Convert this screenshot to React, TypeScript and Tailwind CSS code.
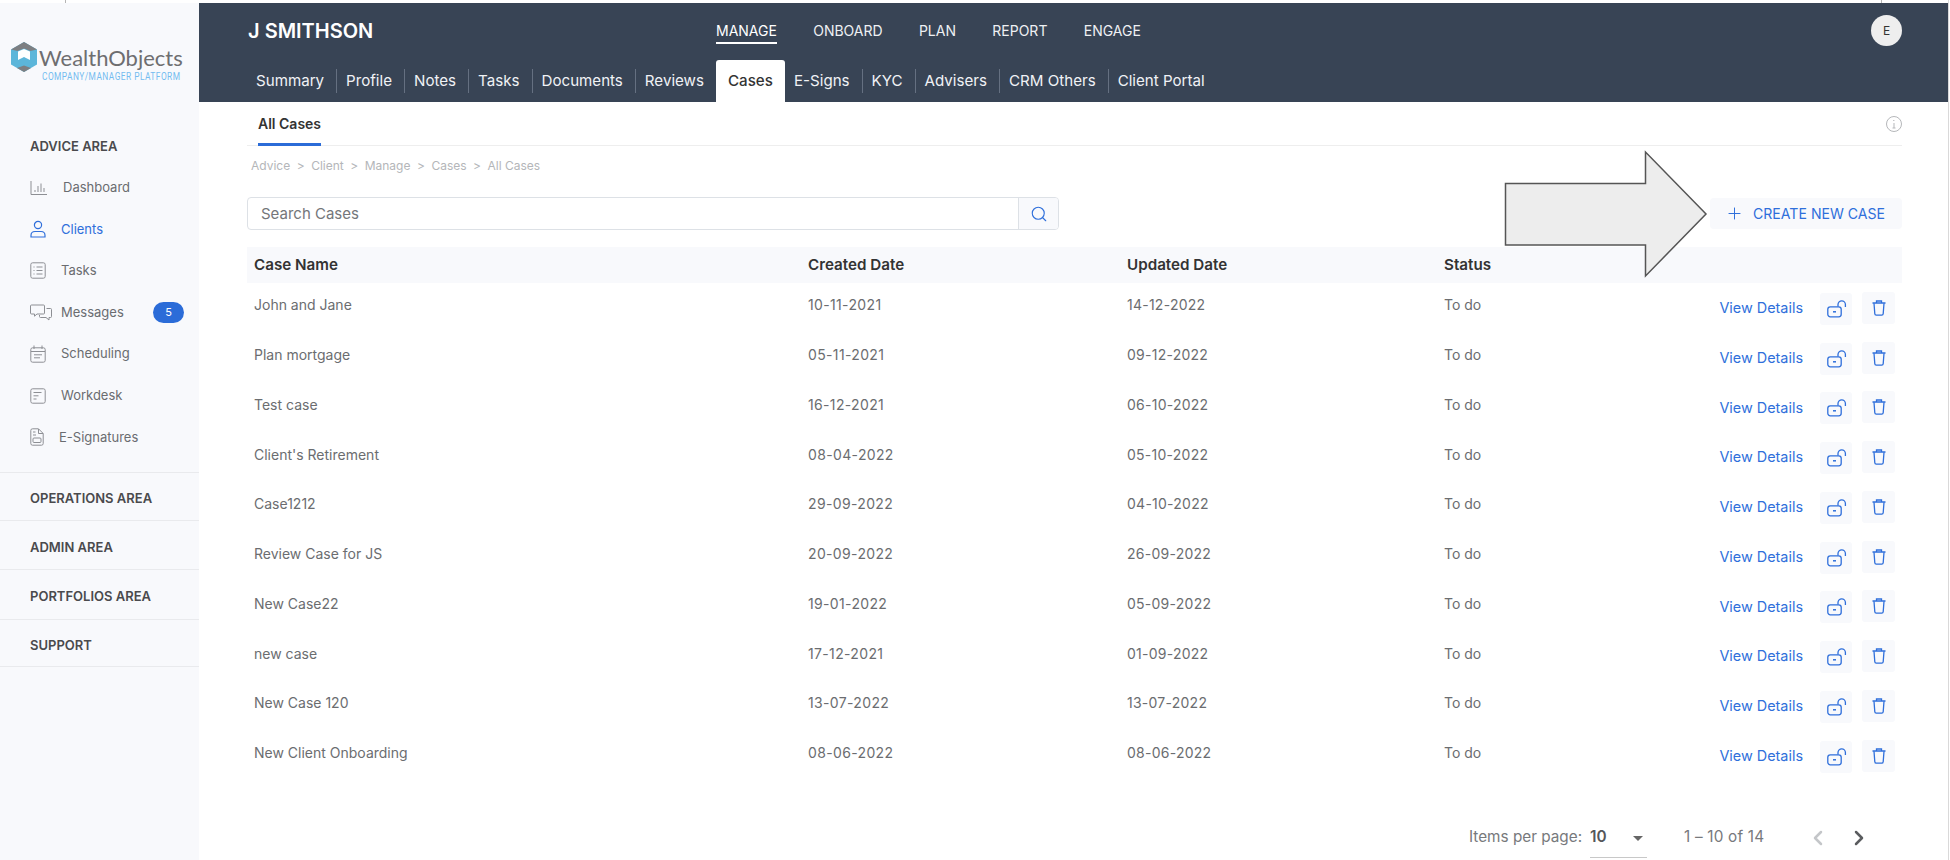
import { Search, Plus, ChevronLeft, ChevronRight } from 'lucide-react';

const CASES = [
  { name: 'John and Jane', created: '10-11-2021', updated: '14-12-2022' },
  { name: 'Plan mortgage', created: '05-11-2021', updated: '09-12-2022' },
  { name: 'Test case', created: '16-12-2021', updated: '06-10-2022' },
  { name: "Client's Retirement", created: '08-04-2022', updated: '05-10-2022' },
  { name: 'Case1212', created: '29-09-2022', updated: '04-10-2022' },
  { name: 'Review Case for JS', created: '20-09-2022', updated: '26-09-2022' },
  { name: 'New Case22', created: '19-01-2022', updated: '05-09-2022' },
  { name: 'new case', created: '17-12-2021', updated: '01-09-2022' },
  { name: 'New Case 120', created: '13-07-2022', updated: '13-07-2022' },
  { name: 'New Client Onboarding', created: '08-06-2022', updated: '08-06-2022' },
];

const TOP_NAV = ['MANAGE', 'ONBOARD', 'PLAN', 'REPORT', 'ENGAGE'];
const SUB_NAV = ['Summary', 'Profile', 'Notes', 'Tasks', 'Documents', 'Reviews', 'Cases', 'E-Signs', 'KYC', 'Advisers', 'CRM Others', 'Client Portal'];
const CRUMBS = ['Advice', 'Client', 'Manage', 'Cases', 'All Cases'];

function DashboardIcon() {
  return (
    <svg width="18" height="16" viewBox="0 0 18 16" fill="none" stroke="#8d8f94" strokeWidth="1">
      <path d="M1 1v13.500h16" />
      <path d="M5 12v-2M8 12V6M11 12V3.500M14 12V8" />
    </svg>
  );
}

function UserIcon() {
  return (
    <svg width="16" height="18" viewBox="0 0 16 18" fill="none" stroke="#2f6fdb" strokeWidth="1.200">
      <circle cx="8" cy="5" r="3.600" />
      <path d="M1 17v-1.600C1 12.800 3 11.500 5 11.500h6c2 0 4 1.300 4 3.900V17z" />
    </svg>
  );
}

function TasksIcon() {
  return (
    <svg width="16" height="17" viewBox="0 0 16 17" fill="none" stroke="#8d8f94" strokeWidth="1">
      <rect x="0.800" y="0.800" width="14.400" height="15.400" rx="1.800" />
      <path d="M3.500 5h1M6.500 5h6M3.500 8.500h1M6.500 8.500h6M3.500 12h1M6.500 12h6" />
    </svg>
  );
}

function MessagesIcon() {
  return (
    <svg width="22" height="18" viewBox="0 0 22 18" fill="none" stroke="#8d8f94" strokeWidth="1">
      <path d="M1.500 1h12a1 1 0 0 1 1 1v7a1 1 0 0 1-1 1H7l-2.500 2.200V10H1.500a1 1 0 0 1-1-1V2a1 1 0 0 1 1-1z" />
      <path d="M16.500 4.500h4a1 1 0 0 1 1 1v7a1 1 0 0 1-1 1H19v2.500l-3-2.500h-5.500a1 1 0 0 1-1-1V11" />
    </svg>
  );
}

function ScheduleIcon() {
  return (
    <svg width="16" height="18" viewBox="0 0 16 18" fill="none" stroke="#8d8f94" strokeWidth="1">
      <rect x="0.800" y="2.800" width="14.400" height="14.400" rx="1.800" />
      <path d="M1 6.500h14M4 0.500v3.500M12 0.500v3.500M4 9.800h8M4 12.800h6" />
    </svg>
  );
}

function WorkdeskIcon() {
  return (
    <svg width="16" height="16" viewBox="0 0 16 16" fill="none" stroke="#8d8f94" strokeWidth="1">
      <rect x="0.800" y="0.800" width="14.400" height="14.400" rx="1.800" />
      <path d="M3.500 4.500h8M3.500 7.800h5M3.500 11h3" />
    </svg>
  );
}

function SignIcon() {
  return (
    <svg width="14" height="18" viewBox="0 0 14 18" fill="none" stroke="#8d8f94" strokeWidth="1">
      <path d="M2.500 0.800h6l4.700 4.700v10a1.700 1.700 0 0 1-1.700 1.700h-9a1.700 1.700 0 0 1-1.700-1.700v-13a1.700 1.700 0 0 1 1.700-1.700z" />
      <path d="M8.500 1v4.500h4.500M3 4h2.500M3 7h3" />
      <rect x="3" y="10" width="8" height="4.500" rx="1" />
    </svg>
  );
}

function LockOpenIcon() {
  return (
    <svg width="20" height="18" viewBox="0 0 20 18" fill="none" stroke="#2f6fdb" strokeWidth="1.300">
      <rect x="0.800" y="6.800" width="13.400" height="10" rx="2.500" />
      <path d="M6 11.800h3" strokeWidth="1.500" />
      <path d="M11 6.500V4.500a3.700 3.700 0 0 1 7.400 0V7" />
    </svg>
  );
}

function TrashIcon() {
  return (
    <svg width="14" height="16" viewBox="0 0 14 16" fill="none" stroke="#2f6fdb" strokeWidth="1.300">
      <path d="M0.500 3h13M4.500 2.800V1h5v1.800" />
      <path d="M2 3.200l0.800 10.600A1.500 1.500 0 0 0 4.300 15.200h5.400a1.500 1.500 0 0 0 1.500-1.400L12 3.200" />
    </svg>
  );
}

function Logo() {
  return (
    <div className="flex items-start pl-[11px] pt-[39px] h-[123px]">
      <svg width="26" height="30" viewBox="0 0 26 30" className="shrink-0">
        <path d="M13 0l13 7.400v15.200L13 30 0 22.600V7.400z" fill="#5cb6da" />
        <path d="M13 0l13 7.400-6.500 1.600L13 6.500 6.500 9 0 7.400z" fill="#7d7f82" />
        <path d="M13 30l-7-4 7-2.500 7 2.500z" fill="#7d7f82" />
        <path d="M7 9.500L13 7l6 2.500v8.500l-6-3-6 3z" fill="#fff" />
      </svg>
      <div className="ml-[2px] flex flex-col pt-[1px]">
        <span className="font-['Lato',sans-serif] text-[22px] leading-[30px] text-[#6e6e70]">WealthObjects</span>
        <span className="font-['Roboto',sans-serif] text-[11px] leading-[10px] ml-[3px] -mt-[1.500px] text-[#74bcf0] tracking-[0.6px] whitespace-nowrap origin-left scale-x-[0.76]">COMPANY/MANAGER PLATFORM</span>
      </div>
    </div>
  );
}

function SideItem({ icon, label, active, badge, gap }: { icon: React.ReactNode; label: string; active?: boolean; badge?: string; gap: string }) {
  return (
    <div className={`flex items-center h-[41.6px] pl-[30px] pr-[15px] text-[13px] ${active ? 'text-[#2f6fdb]' : 'text-[#6a6c70]'}`}>
      <span className="w-[22px] flex shrink-0">{icon}</span>
      <span className={gap}>{label}</span>
      {badge && (
        <span className="ml-auto w-[31px] h-[21px] rounded-full bg-[#2b6cd8] text-white text-[11px] flex items-center justify-center">{badge}</span>
      )}
    </div>
  );
}

function AreaRow({ label, h }: { label: string; h: string }) {
  return (
    <div className={`${h} pt-[6px] flex items-center pl-[30px] border-b border-[#e9eaed] text-[13px] font-semibold text-[#4a4a4d]`}>{label}</div>
  );
}

function Sidebar() {
  return (
    <aside className="w-[199px] shrink-0 bg-[#f8f9fc]">
      <Logo />
      <div className="h-[41px] flex items-center pl-[30px] text-[13px] font-semibold text-[#4a4a4d]">ADVICE AREA</div>
      <SideItem icon={<DashboardIcon />} label="Dashboard" gap="ml-[11px]" />
      <SideItem icon={<UserIcon />} label="Clients" active gap="ml-[9px]" />
      <SideItem icon={<TasksIcon />} label="Tasks" gap="ml-[9px]" />
      <SideItem icon={<MessagesIcon />} label="Messages" badge="5" gap="ml-[9px]" />
      <SideItem icon={<ScheduleIcon />} label="Scheduling" gap="ml-[9px]" />
      <SideItem icon={<WorkdeskIcon />} label="Workdesk" gap="ml-[9px]" />
      <SideItem icon={<SignIcon />} label="E-Signatures" gap="ml-[7px]" />
      <div className="h-[14.400px] border-b border-[#e9eaed]" />
      <AreaRow label="OPERATIONS AREA" h="h-[48px]" />
      <AreaRow label="ADMIN AREA" h="h-[49px]" />
      <AreaRow label="PORTFOLIOS AREA" h="h-[50px]" />
      <AreaRow label="SUPPORT" h="h-[47px]" />
    </aside>
  );
}

function Header() {
  return (
    <header className="h-[99px] bg-[#384455] text-white">
      <div className="h-[57px] pb-[2px] pl-[49px] pr-[46px] flex items-center">
        <div className="w-[468px] text-[20px] font-semibold leading-none">J SMITHSON</div>
        <nav className="flex gap-[36.3px] text-[14px]">
          {TOP_NAV.map(n => (
            <span key={n} className={`relative ${n === 'MANAGE' ? 'text-white' : 'text-[#eef0f3]'}`}>
              {n}
              {n === 'MANAGE' && <span className="absolute left-0 right-0 top-[22px] h-[2px] bg-white" />}
            </span>
          ))}
        </nav>
        <div className="ml-auto w-[31px] h-[31px] rounded-full bg-[#eeeeee] text-[#333] text-[12px] flex items-center justify-center">E</div>
      </div>
      <nav className="h-[42px] pl-[48px] flex items-stretch text-[15.130px]">
        {SUB_NAV.map(s => {
          if (s === 'Cases') {
            return <div key={s} className="w-[69px] flex items-center justify-center bg-white text-[#333] font-medium rounded-t-[3px]">{s}</div>;
          }
          const noSep = s === 'Reviews' || s === 'Client Portal';
          return (
            <div key={s} className="flex items-center pl-[9px]">
              <span className={`pr-[12px] h-[24px] leading-[24px] text-[#f0f2f5] ${noSep ? '' : 'border-r border-[#657081]'}`}>{s}</span>
            </div>
          );
        })}
      </nav>
    </header>
  );
}

function CaseRow({ name, created, updated }: { name: string; created: string; updated: string }) {
  return (
    <div className="grid grid-cols-[554px_319px_317px_1fr] items-center h-[49.75px] pl-[7px] pr-[7px] text-[14px] text-[#6b6d70]">
      <span className="pb-[6px]">{name}</span>
      <span className="pb-[6px] tracking-[0.35px]">{created}</span>
      <span className="pb-[6px] tracking-[0.25px]">{updated}</span>
      <div className="flex items-center">
        <span className="pb-[6px]">To do</span>
        <span className="ml-auto text-[#2f6fdb] text-[14.400px]">View Details</span>
        <button className="ml-[17px] mt-[2px] pl-[2px] w-[32px] h-[32px] rounded-[3px] bg-[#f8f9fc] flex items-center justify-center"><LockOpenIcon /></button>
        <button className="ml-[10px] w-[33px] h-[32px] rounded-[3px] bg-[#f8f9fc] flex items-center justify-center"><TrashIcon /></button>
      </div>
    </div>
  );
}

export default function App() {
  return (
    <div className="relative w-[1950px] h-[860px] overflow-hidden bg-white font-['Inter',sans-serif]">
      <div className="h-[3px]" />
      <div className="flex h-[857px]">
        <Sidebar />
        <main className="w-[1749px]">
          <Header />
          <div className="pl-[48px] pr-[46px]">
            {/* tab strip */}
            <div className="relative h-[44px] flex items-start border-b border-[#eeeeee]">
              <div className="ml-[11px] h-[44px] border-b-[3px] border-[#2b6cd8] pt-[13px] text-[14px] leading-[18px] font-semibold text-[#333]">All Cases</div>
              <svg width="16" height="16" viewBox="0 0 16 16" fill="none" stroke="#b5b7ba" strokeWidth="1" className="ml-auto mt-[14px]">
                <circle cx="8" cy="8" r="7.500" />
                <path d="M8 7v5M6.500 12h3M7.200 4.500h1.200" />
              </svg>
            </div>
            <div className="flex items-center gap-[6.500px] h-[38px] pl-[4px] pt-[2px] text-[12px] text-[#b4b6b9]">
              {CRUMBS.map((c, i) => (
                <span key={c} className="flex items-center gap-[6.500px]">
                  {i > 0 && <span>&gt;</span>}
                  {c}
                </span>
              ))}
            </div>
            {/* search + create */}
            <div className="flex items-center h-[33px] mt-[13px]">
              <div className="flex w-[812px] h-[33px] rounded-[4px] border border-[#dde1e6] overflow-hidden">
                <div className="flex-1 pl-[13px] pt-[1px] flex items-center text-[15px] text-[#74767a]">Search Cases</div>
                <div className="w-[40px] bg-[#f8f9fc] border-l border-[#dde1e6] flex items-center justify-center">
                  <Search size={18} strokeWidth={1.5} color="#2f6fdb" />
                </div>
              </div>
              <div className="ml-auto w-[192px] h-[31px] rounded-[4px] bg-[#f8f9fc] flex items-center pl-[15px] text-[14.100px] text-[#2f6fdb]">
                <Plus size={19} strokeWidth={1.25} />
                <span className="ml-[9px] whitespace-nowrap">CREATE NEW CASE</span>
              </div>
            </div>
            {/* table */}
            <div className="mt-[17px]">
              <div className="grid grid-cols-[554px_319px_317px_1fr] items-center h-[36px] pl-[7px] pt-[1px] bg-[#f8f9fc] text-[15.200px] font-semibold text-[#333]">
                <span>Case Name</span>
                <span>Created Date</span>
                <span>Updated Date</span>
                <span>Status</span>
              </div>
              {CASES.map(c => <CaseRow key={c.name} {...c} />)}
            </div>
            {/* pagination */}
            <div className="flex items-center mt-[45px] pl-[1222px] text-[15.300px] text-[#77797c] h-[24px]">
              <span className="whitespace-nowrap">Items per page:</span>
              <div className="relative ml-[8px] w-[57px] h-[24px] flex items-center font-semibold text-[#55575a]">
                10
                <span className="absolute right-[4px] top-[10px] w-0 h-0 border-x-[5px] border-x-transparent border-t-[5px] border-t-[#666]" />
                <span className="absolute left-0 right-0 top-[31px] h-px bg-[#c8c8c8]" />
              </div>
              <span className="ml-[37px] whitespace-nowrap tracking-[0.2px]">1 – 10 of 14</span>
              <ChevronLeft size={24} strokeWidth={2.5} color="#c4c6c9" className="ml-[42px]" />
              <ChevronRight size={24} strokeWidth={2.5} color="#5a5c5f" className="ml-[17px]" />
            </div>
          </div>
        </main>
      </div>
      {/* callout arrow */}
      <svg width="210" height="130" viewBox="0 0 210 130" className="absolute left-[1500px] top-[148px]">
        <path d="M5.500 35.500H145.500V4L206 66 145.500 128V97H5.500z" fill="#ededed" stroke="#555" strokeWidth="1.500" />
      </svg>
      {/* stray marks along the top and right edge of the capture */}
      <div className="absolute left-[65px] top-0 w-px h-[3px] bg-[#b5b5b5]" />
      <div className="absolute left-[1881px] top-0 w-px h-[3px] bg-[#b5b5b5]" />
      <div className="absolute right-[1px] top-0 bottom-0 w-px bg-[#d9d9d9]" />
    </div>
  );
}
